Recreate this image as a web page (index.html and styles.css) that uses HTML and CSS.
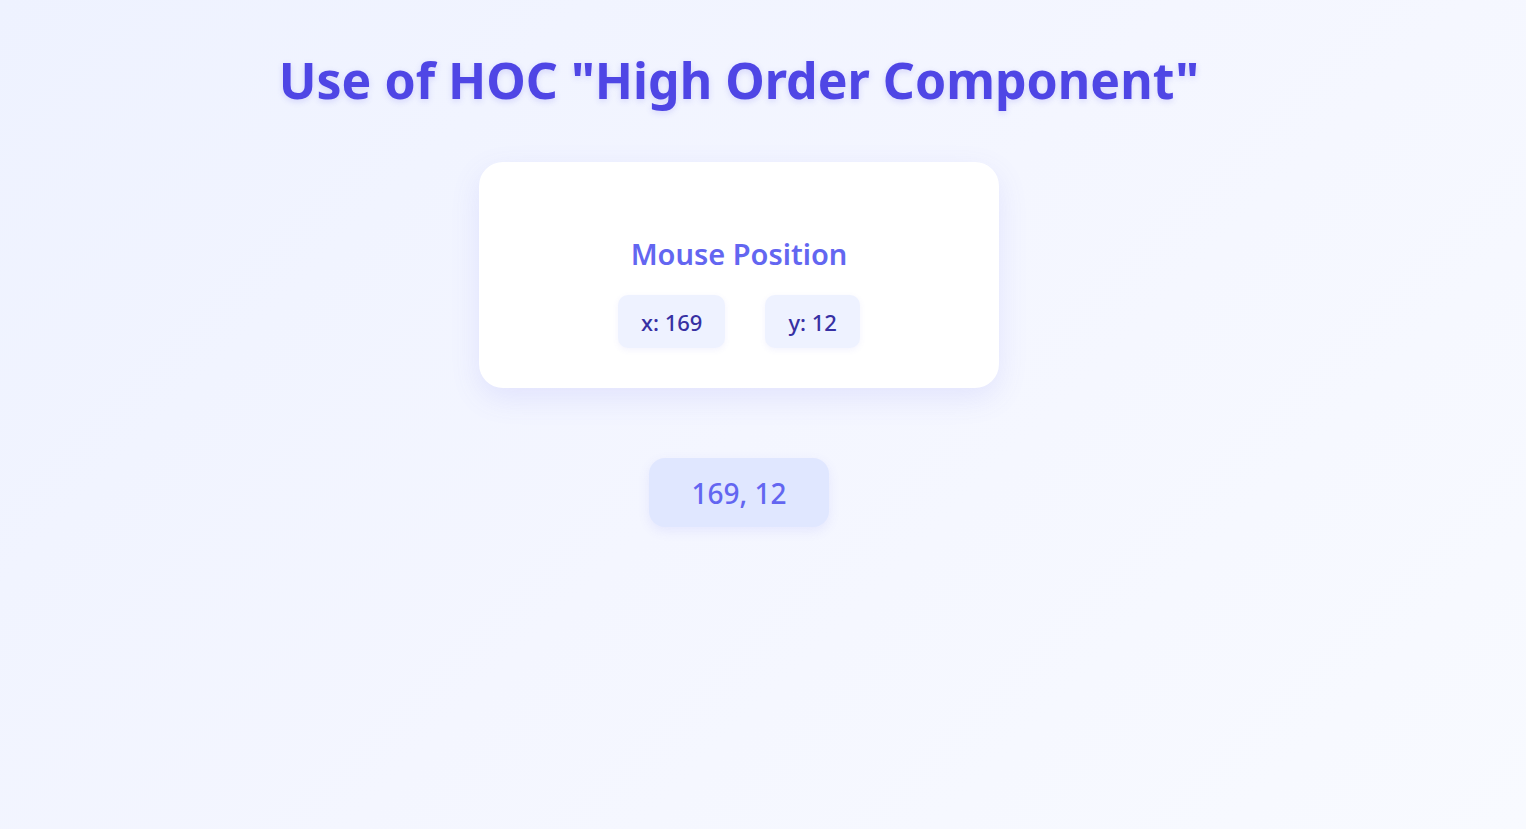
FILE: index.html
```html
<!DOCTYPE html>
<html lang="en">
<head>
<meta charset="utf-8">
<title>HOC Demo</title>
<link rel="stylesheet" href="styles.css">
</head>
<body>
<main class="app">
  <h1 class="title">Use of HOC "High Order Component"</h1>
  <section class="card">
    <h2 class="card-title">Mouse Position</h2>
    <div class="coords">
      <span class="coord">x: 169</span>
      <span class="coord">y: 12</span>
    </div>
  </section>
  <div class="pill">169, 12</div>
</main>
</body>
</html>
```

FILE: styles.css
```css
html, body {
  margin: 0;
  padding: 0;
}
body {
  min-height: 100vh;
  background: linear-gradient(135deg, #eef2ff 0%, #f4f6ff 50%, #f8faff 100%);
  font-family: "Noto Sans", "Open Sans", sans-serif;
}
.app {
  display: flex;
  flex-direction: column;
  align-items: center;
  padding: 50px 48px 0 0;
}
.title {
  margin: 0;
  font-size: 50px;
  font-weight: 700;
  line-height: 60px;
  color: #4f46e5;
  text-shadow: 0 2px 6px rgba(79, 70, 229, 0.18);
}
.card {
  margin-top: 52px;
  width: 520px;
  height: 226px;
  box-sizing: border-box;
  background: #ffffff;
  border-radius: 24px;
  box-shadow: 0 10px 30px rgba(99, 102, 241, 0.12);
  display: flex;
  flex-direction: column;
  align-items: center;
  justify-content: center;
  padding-top: 35px;
}
.card-title {
  margin: 0 0 24px;
  font-size: 29px;
  font-weight: 600;
  color: #6366f1;
  line-height: 1.2;
}
.coords {
  display: flex;
  gap: 40px;
}
.coord {
  display: inline-flex;
  align-items: center;
  height: 53px;
  padding: 0 23px;
  background: #eef2ff;
  border-radius: 10px;
  color: #3730a3;
  font-size: 22px;
  font-weight: 500;
  box-shadow: 0 2px 6px rgba(99, 102, 241, 0.08);
}
.pill {
  margin-top: 70px;
  display: inline-flex;
  align-items: center;
  height: 69px;
  padding: 0 42px;
  background: #e0e7ff;
  border-radius: 16px;
  color: #6366f1;
  font-size: 28px;
  font-weight: 500;
  box-shadow: 0 4px 12px rgba(99, 102, 241, 0.1);
}
```
